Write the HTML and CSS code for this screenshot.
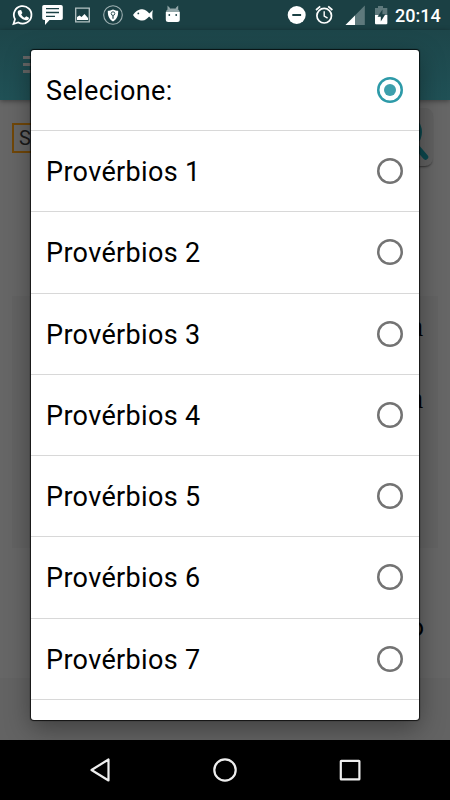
FILE: index.html
```html
<!DOCTYPE html>
<html lang="pt-BR">
<head>
    <meta charset="UTF-8">
    <meta name="viewport" content="width=device-width, initial-scale=1.0">
    <title>Provérbios</title>
    <link rel="stylesheet" href="styles.css">
</head>
<body>
<div class="screen">
    <!-- Status bar -->
    <header class="status">
        <svg class="status-left" width="190" height="30" viewBox="0 0 190 30">
            <path d="M13.500 24 15 19.200A8.800 8.800 0 1 1 18.300 22.500Z" fill="none" stroke="#fff" stroke-width="1.800"/>
            <path d="M19.200 10.200l1.900-.2 1.300 3-1.200 1.600c.9 1.600 2 2.500 3.500 3.200l1.500-1.500 2.800 1.400c0 2-1.600 2.800-3.200 2.600-4.200-.7-8-4.400-8.100-8-.1-.8.7-1.800 1.500-2.100z" fill="#fff"/>
            <path d="M44 5h17a1.800 1.800 0 0 1 1.800 1.800v11.400A1.800 1.800 0 0 1 61 20H49.500l-4.500 5v-5h-1a1.800 1.800 0 0 1-1.800-1.800V6.800A1.800 1.800 0 0 1 44 5z" fill="#fff"/>
            <path d="M46 8.600h13M46 12.500h13M46 16.400h9" stroke="#1b4044" stroke-width="1.300"/>
            <path d="M75.700 8.200h13.600v13.600H75.700z" fill="none" stroke="#b5c3c4" stroke-width="1.300"/>
            <path d="M77 20v-3l2.500-1.500 2 1.500 3-3 3.500 4v2z" fill="#fff"/>
            <circle cx="113" cy="15" r="9.300" fill="none" stroke="#9eb0b2" stroke-width="1.100"/>
            <path d="M113 9.500c2 1 3.500 1.300 5.200 1.300 0 5-1 8.400-5.200 10.700-4.200-2.300-5.200-5.700-5.200-10.700 1.700 0 3.200-.3 5.200-1.300z" fill="#fff"/>
            <circle cx="113" cy="13.600" r="1.800" fill="none" stroke="#36575b" stroke-width="1"/>
            <path d="M113 15.200v3.500" stroke="#36575b" stroke-width="1.300"/>
            <path d="M133 15c3-4.300 6-5.700 9.500-5.700 3 0 5 2.500 6.800 4.200l3.600-3.500c-.8 3.300-.8 6.500 0 10l-3.800-3.500c-2 2.300-3.900 4-6.600 4-3.700 0-6.700-1.300-9.500-5.500z" fill="#fff"/>
            <circle cx="138.300" cy="13.400" r=".9" fill="#1b4044"/>
            <path d="M166 12c0-2 2.500-3.500 6.800-3.500s6.800 1.500 6.800 3.500z" fill="#94a7a9"/>
            <path d="M167.500 10V5.500l3 3M178.200 10V5.500l-3 3" fill="#94a7a9"/>
            <path d="M165.800 12h14v7.500a2.500 2.500 0 0 1-2.500 2.500h-9a2.500 2.500 0 0 1-2.500-2.500z" fill="#fff"/>
            <circle cx="169.300" cy="15" r=".9" fill="#1b4044"/>
            <circle cx="176.200" cy="15" r=".9" fill="#1b4044"/>
        </svg>
        <svg class="status-right" width="110" height="30" viewBox="280 0 110 30">
            <circle cx="296.700" cy="15" r="9" fill="#fff"/>
            <path d="M292.300 15h8.800" stroke="#1b4044" stroke-width="2"/>
            <g fill="none" stroke="#fff">
                <circle cx="324.200" cy="15.700" r="7.300" stroke-width="1.700"/>
                <path d="M324.200 11.200v5l3.400 2" stroke-width="1.400"/>
                <path d="M316 10l4.200-3.600M332.400 10l-4.200-3.600" stroke-width="1.700"/>
            </g>
            <path d="M364.800 5.500V25H345.500z" fill="#5e797c"/>
            <path d="M355 15.400V25h-9.500z" fill="#fff"/>
            <path d="M378 6h5v2h4.300v16.200H375V8h3z" fill="#5e797c"/>
            <path d="M375 15h12.300v8a1.200 1.200 0 0 1-1.200 1.200h-9.900A1.200 1.200 0 0 1 375 23z" fill="#fff"/>
            <path d="M382.500 9.500l-5 7.200h3.300v4.800l4.600-7.300h-3z" fill="#1b4044"/>
        </svg>
        <span class="clock">20:14</span>
    </header>

    <!-- Page under the dialog -->
    <div class="appbar">
        <div class="menu-icon"><i></i><i></i><i></i></div>
    </div>
    <main class="page">
        <div class="search">
            <div class="select">Selecione:</div>
            <div class="search-button">
                <svg width="60" height="58" viewBox="0 0 60 58">
                    <circle cx="32" cy="24" r="14.500" fill="none" stroke="#0c484e" stroke-width="5"/>
                    <path d="M43 38l9.500 11" stroke="#0c484e" stroke-width="5.500" stroke-linecap="round"/>
                </svg>
            </div>
        </div>
        <div class="card">
            <p>a</p>
            <p>a</p>
        </div>
        <p class="verse">o</p>
        <div class="bottom"></div>
    </main>

    <!-- Android navigation -->
    <nav class="navbar">
        <svg width="24" height="26" viewBox="0 0 24 26"><path d="M20.500 2.500v21L3.500 13z"/></svg>
        <svg width="26" height="26" viewBox="0 0 26 26"><circle cx="13" cy="13" r="10.700"/></svg>
        <svg width="24" height="24" viewBox="0 0 24 24"><rect x="2.800" y="2.800" width="18.600" height="18.600" rx=".5"/></svg>
    </nav>

    <!-- Option list -->
    <div class="dialog">
        <div class="option selected"><span>Selecione:</span><i class="radio"></i></div>
        <div class="option"><span>Provérbios 1</span><i class="radio"></i></div>
        <div class="option"><span>Provérbios 2</span><i class="radio"></i></div>
        <div class="option"><span>Provérbios 3</span><i class="radio"></i></div>
        <div class="option"><span>Provérbios 4</span><i class="radio"></i></div>
        <div class="option"><span>Provérbios 5</span><i class="radio"></i></div>
        <div class="option"><span>Provérbios 6</span><i class="radio"></i></div>
        <div class="option"><span>Provérbios 7</span><i class="radio"></i></div>
    </div>
</div>
</body>
</html>
```

FILE: styles.css
```css
* {
    box-sizing: border-box;
}

body {
    margin: 0;
    font-family: Roboto, sans-serif;
    background-color: #000;
}

p {
    margin: 0;
}

.screen {
    position: relative;
    display: flex;
    flex-direction: column;
    width: 450px;
    height: 800px;
    overflow: hidden;
}

.status {
    display: flex;
    height: 30px;
    background-color: #1b4044;
}

.status-right {
    margin-left: 90px;
}

.clock {
    margin-left: 5px;
    color: #fff;
    font-size: 18px;
    font-weight: 500;
    line-height: 32px;
}

.appbar {
    height: 70px;
    padding: 26px 0 0 23px;
    background: linear-gradient(#1d464a, #205156);
    box-shadow: 0 1px 5px rgba(0, 0, 0, 0.4);
    z-index: 1;
}

.menu-icon {
    display: flex;
    flex-direction: column;
    gap: 4px;
    width: 24px;
}

.menu-icon i {
    height: 3px;
    background-color: #666;
}

.page {
    display: flex;
    flex-direction: column;
    height: 640px;
    background-color: #666;
}

.search {
    display: flex;
    justify-content: space-between;
    height: 196px;
    padding: 8px 17px 0 12px;
}

.select {
    width: 300px;
    height: 30px;
    margin-top: 15px;
    padding-left: 5px;
    border: 2px solid #714708;
    color: #1a1a1a;
    font-size: 20px;
    line-height: 27px;
}

.search-button {
    width: 60px;
    height: 58px;
    border-radius: 8px;
    background-color: #616161;
    box-shadow: 0 2px 2px -1px #333;
}

.card {
    height: 252px;
    margin: 0 12px;
    padding: 10px 15px 0 0;
    background-color: #636363;
}

.card p {
    height: 72px;
    color: #000;
    font-family: "Liberation Serif", serif;
    font-size: 29px;
    line-height: 40px;
    text-align: right;
}

.verse {
    height: 130px;
    padding: 59px 26px 0 0;
    color: #000;
    font-size: 26px;
    line-height: 40px;
    text-align: right;
}

.bottom {
    flex: 1;
    background-color: #636363;
}

.navbar {
    display: flex;
    align-items: center;
    justify-content: space-between;
    height: 60px;
    padding: 0 88px;
    background-color: #000;
    z-index: 2;
}

.navbar svg {
    fill: none;
    stroke: #eee;
    stroke-width: 2.2;
    stroke-linejoin: round;
}

.dialog {
    position: absolute;
    top: 50px;
    left: 31px;
    z-index: 1;
    width: 388px;
    height: 670px;
    overflow: hidden;
    border-radius: 3px;
    background-color: #fff;
    box-shadow: 0 0 1px 1px rgba(0, 0, 0, 0.75), 0 8px 26px rgba(0, 0, 0, 0.38);
}

.option {
    display: flex;
    align-items: center;
    justify-content: space-between;
    height: 81.25px;
    padding: 0 16px 0 15px;
    border-bottom: 1px solid #d8d8d8;
    color: #000;
    font-size: 27px;
    letter-spacing: 0.35px;
}

.option span {
    padding-top: 2px;
}

.option:first-child {
    height: 81px;
}

.radio {
    width: 26px;
    height: 26px;
    border-radius: 50%;
    box-shadow: inset 0 0 0 2.5px #737373;
}

.selected .radio {
    padding: 7px;
    background: #3d9fac content-box;
    box-shadow: inset 0 0 0 2.5px #2d9aa8;
}
```
